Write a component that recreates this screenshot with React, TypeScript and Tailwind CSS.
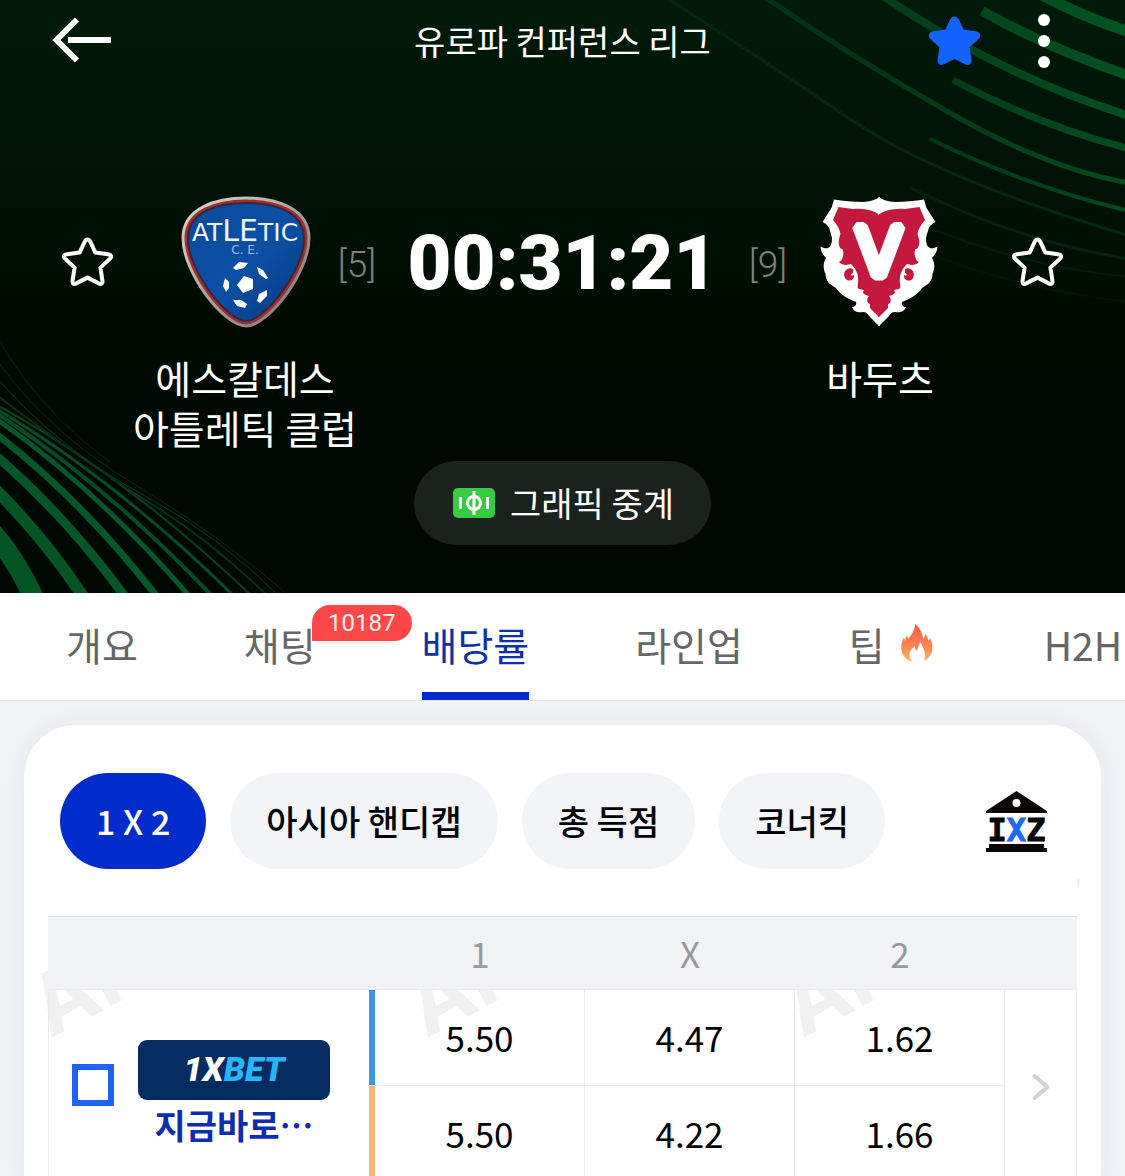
import React from "react";

const STAR_PATH =
  "M25.5 3.5 C27 3.5 27.8 4.6 28.6 6.4 L33.4 16.6 L46 18.2 C49.4 18.7 50 20.8 47.8 22.9 L38.4 31.6 L40.4 44.6 C40.9 47.6 39.2 48.7 36.8 47.4 L25.5 41.6 L14.2 47.4 C11.8 48.7 10.1 47.6 10.6 44.6 L12.6 31.6 L3.2 22.9 C1 20.8 1.6 18.7 5 18.2 L17.6 16.6 L22.4 6.4 C23.2 4.6 24 3.5 25.5 3.5 Z";

function Star({ filled = false }: { filled?: boolean }) {
  return (
    <svg viewBox="0 1 51 51" className="size-[51px]" aria-hidden="true">
      <path
        d={STAR_PATH}
        fill={filled ? "#1563ff" : "none"}
        stroke={filled ? "#1563ff" : "#ffffff"}
        strokeWidth="4"
        strokeLinejoin="round"
      />
    </svg>
  );
}

function HeroBackground() {
  return (
    <svg
      className="absolute inset-0 h-full w-full"
      viewBox="0 0 1125 593"
      preserveAspectRatio="none"
      aria-hidden="true"
    >
      <defs>
        <linearGradient id="hero" x1="0" y1="0" x2="0" y2="1">
          <stop offset="0" stopColor="#001a09" />
          <stop offset="0.4" stopColor="#000f04" />
          <stop offset="0.65" stopColor="#000901" />
          <stop offset="1" stopColor="#000801" />
        </linearGradient>
        <linearGradient id="ray" gradientUnits="userSpaceOnUse" x1="700" y1="260" x2="1125" y2="20">
          <stop offset="0" stopColor="#01240e" />
          <stop offset="0.5" stopColor="#033616" />
          <stop offset="1" stopColor="#025522" />
        </linearGradient>
      </defs>
      <rect width="1125" height="593" fill="url(#hero)" />
      <g fill="none" stroke="url(#ray)">
        <path d="M1040 -6 Q1085 18 1130 32" strokeWidth="11" />
        <path d="M982 11 Q1050 49 1130 76" strokeWidth="10" />
        <path d="M880 -6 Q1000 76 1130 116" strokeWidth="8" />
        <path d="M953 80 Q1040 126 1130 149" strokeWidth="7" />
        <path d="M762 -5 Q850 56 950 113 T1130 183" strokeWidth="5" />
        <path d="M930 139 Q1030 188 1130 211" strokeWidth="4" />
        <path d="M670 0 Q760 58 850 119 T1130 236" strokeWidth="3" stroke="#022813" />
        <path d="M911 188 Q1020 242 1130 259" strokeWidth="3" stroke="#02220e" />
        <path d="M925 226 Q1020 266 1130 277" strokeWidth="2" stroke="#011a09" />
        <path d="M925 252 Q1020 290 1130 302" strokeWidth="2" stroke="#011407" />
      </g>
      <g fill="none" stroke="#05572a">
        <path d="M-8 532 Q14 556 34 598" strokeWidth="20" stroke="#035624" />
        <path d="M-5 489 Q46 540 84 598" strokeWidth="12" stroke="#035624" />
        <path d="M-5 455 Q66 516 126 598" strokeWidth="9" />
        <path d="M-5 433 Q82 500 158 598" strokeWidth="7" />
        <path d="M-5 418 Q96 488 191 598" strokeWidth="5" />
        <path d="M-5 412 Q108 486 214 598" strokeWidth="4" stroke="#064b28" />
        <path d="M-5 408 Q116 480 236 598" strokeWidth="3" stroke="#064b28" />
        <path d="M-5 404 Q124 474 254 598" strokeWidth="2" stroke="#06401f" />
        <path d="M-5 394 Q90 466 150 503 T270 598" strokeWidth="2" stroke="#05301a" />
        <path d="M-5 376 Q60 450 140 493 T281 598" strokeWidth="1" stroke="#0a3a24" />
        <path d="M-5 358 Q50 434 134 484 T292 598" strokeWidth="1" stroke="#072818" />
        <path d="M-5 334 Q40 412 110 462" strokeWidth="1" stroke="#052013" />
      </g>
    </svg>
  );
}

function AtleticCrest() {
  return (
    <svg viewBox="0 0 132 134" className="h-[134px] w-[132px]" role="img" aria-label="Atlètic C.E.">
      <defs>
        <linearGradient id="shield" x1="0" y1="0" x2="1" y2="1">
          <stop offset="0" stopColor="#0a4a9a" />
          <stop offset="0.5" stopColor="#0b50a6" />
          <stop offset="1" stopColor="#083a80" />
        </linearGradient>
        <linearGradient id="rim" x1="0" y1="0" x2="1" y2="1">
          <stop offset="0" stopColor="#dcd6d2" />
          <stop offset="1" stopColor="#77706c" />
        </linearGradient>
      </defs>
      <path
        d="M66 3 C96 3 129 13 129 43 C129 78 88 131 66 131 C44 131 3 78 3 43 C3 13 36 3 66 3 Z"
        fill="#9c302b"
        stroke="url(#rim)"
        strokeWidth="3"
      />
      <path
        d="M66 8 C94 8 124 16 124 44 C124 75 85 126 66 126 C47 126 8 75 8 44 C8 16 38 8 66 8 Z"
        fill="url(#shield)"
        stroke="#3b2440"
        strokeWidth="2"
      />
      <g fill="#eef3fa" fontFamily="'DejaVu Sans', sans-serif" textAnchor="middle">
        <text x="65" y="46" fontSize="25">
          AT<tspan fontSize="30">LE</tspan>TIC
        </text>
        <text x="65" y="59" fontSize="12" fill="#9fb9dc">
          C. E.
        </text>
      </g>
      <g fill="#ffffff">
        <path d="M57 90 L64 81 L73 84 L73 94 L63 98 Z" />
        <path d="M53 73 L59 67 L68 68 L64 73 L56 75 Z" />
        <path d="M77 72 L83 75 L88 83 L86 84 L79 79 Z" />
        <path d="M87 95 L87 101 L80 108 L77 106 L79 99 Z" />
        <path d="M53 105 L61 105 L67 109 L65 113 L57 111 Z" />
        <path d="M45 83 L49 87 L49 93 L46 97 L43 91 Z" />
      </g>
    </svg>
  );
}

function VaduzHalf() {
  return (
    <>
      <path
        d="M60 2 C55 5 50 6.5 43 7 C33 7 23 6 14 4.5 L11.5 13 L2.5 27 C7 29 9.5 32 10 36 C13 43 12 48 10.5 51 C8 54 5 54 0.5 51.5 C1 57 3 60 6 63 C3 68 3 73 5.5 79 C6 86 9 89 16 93 C20 99 26 103 36 107 C37 110 35 112 32 112 C34 117 39 118 43 117 C46 117 48 119 49 121 L59 131 H60 Z"
        fill="#fff"
      />
      <path
        d="M60 20 C53 15 44 13 33 14 L18.5 12 L13 25 C17 30 20 34 20.5 39 C18 46 18 50 21 54 C23 53 24 57 23 61 C22 65 21 66 19 67 C23 71 28 70 31 69 C35 73 38 78 38 83 C39 89 36 92 39 94 L44 95 C41 99 46 100 49 101 C46 105 47 108 50 109 L50 113 L59 122 H60 Z"
        fill="#c4183f"
      />
      <path d="M33 74 C27 71 22 78 25 83 C28 88 35 85 34 80 C31 82 30 79 33 78 Z" fill="#c4183f" />
    </>
  );
}

function VaduzCrest() {
  return (
    <svg viewBox="0 0 118 134" className="h-[134px] w-[118px]" role="img" aria-label="FC Vaduz">
      <VaduzHalf />
      <g transform="matrix(-1 0 0 1 118 0)">
        <VaduzHalf />
      </g>
      <text
        x="59"
        y="81"
        fontSize="67"
        fontWeight="400"
        fontFamily="'DejaVu Sans', sans-serif"
        textAnchor="middle"
        fill="#fff"
        stroke="#fff"
        strokeWidth="9"
        strokeLinejoin="bevel"
      >
        V
      </text>
    </svg>
  );
}

function PitchIcon() {
  return (
    <svg viewBox="0 0 42 30" className="h-[30px] w-[42px]" aria-hidden="true">
      <rect width="42" height="30" rx="5" fill="#36cb40" />
      <g stroke="#fff" strokeWidth="3" fill="none">
        <circle cx="21" cy="15" r="6.5" />
        <path d="M21 3 V27 M7.500 9 V21 M34.5 9 V21" />
      </g>
    </svg>
  );
}

function Flame() {
  return (
    <svg viewBox="0 0 32 38" className="mr-[5px] mb-[4px] ml-[16px] h-[38px] w-[32px]" aria-hidden="true">
      <defs>
        <linearGradient id="flame" x1="0" y1="0" x2="0" y2="1">
          <stop offset="0" stopColor="#fb584a" />
          <stop offset="0.5" stopColor="#fc7d4f" />
          <stop offset="1" stopColor="#ffb75c" />
        </linearGradient>
      </defs>
      <path
        d="M14 0 C18 3 22 9 22 15 C23.5 14 24 12 24 10 C26.5 12 27 15 27.5 17 L29 14 C34 24 31 33 23 37 C25 32 24 27 20 19 C19 18 18.500 19 18.500 21 C17 23 16 26 15.500 27 C14 26 14 24 14 22 C10 25 8 28 8.500 32 C9 34 10 36 12 38 C3 36 -1 28 0.5 20 L3 13 L4 17 L6 11 L7 15 C11 10 14 6 14 0 Z"
        fill="url(#flame)"
      />
    </svg>
  );
}

function IxzIcon() {
  return (
    <svg viewBox="0 0 61 61" className="size-[61px]" aria-hidden="true">
      <path d="M30.5 0 L61 20 V22 H0 V20 Z" fill="#0b0605" />
      <circle cx="30.5" cy="12" r="4" fill="#fff" />
      <text
        x="30.5"
        y="50"
        fontSize="32"
        fontWeight="700"
        fontFamily="'DejaVu Sans Mono', monospace"
        textAnchor="middle"
        fill="#0b0605"
        stroke="#0b0605"
        strokeWidth="1"
      >
        I
        <tspan fill="#1e68fb" stroke="#1e68fb">
          X
        </tspan>
        Z
      </text>
      <path d="M3 53 H58 V57 H61 V61 H0 V57 H3 Z" fill="#0b0605" />
    </svg>
  );
}

const tabs = [
  { label: "개요" },
  { label: "채팅", badge: "10187" },
  { label: "배당률", active: true },
  { label: "라인업" },
  { label: "팁", hot: true },
  { label: "H2H" },
];

const filters = ["1 X 2", "아시아 핸디캡", "총 득점", "코너킥"];

const cellClass = "h-[96px] border-r border-b border-[#ececee] p-0 text-center";
const headClass = "h-[74px] border-t border-b border-t-[#dedfe3] border-b-[#ececee] bg-[#f2f3f7] p-0 font-normal";

export default function App() {
  return (
    <div className="flex h-screen flex-col overflow-hidden bg-[#f2f3f7] font-['Noto_Sans_CJK_KR',sans-serif]">
      <header className="relative shrink-0 bg-[#000a02] pb-[48px] text-white">
        <HeroBackground />
        <div className="relative">
          <div className="grid h-[82px] grid-cols-[1fr_auto_1fr] items-center px-[52px]">
            <button type="button" aria-label="뒤로" className="justify-self-start">
              <svg viewBox="0 0 60 48" className="h-[48px] w-[60px]" fill="none" stroke="#fff" strokeWidth="6" aria-hidden="true">
                <path d="M25 2.5 L4.5 23 L25 43.5 M16 23 H59" />
              </svg>
            </button>
            <h1 className="text-[34px] leading-[50px]">유로파 컨퍼런스 리그</h1>
            <div className="flex items-center gap-[38px] justify-self-end pr-[3px]">
              <button type="button" aria-label="즐겨찾기">
                <Star filled />
              </button>
              <button type="button" aria-label="더보기" className="flex w-[52px] flex-col items-center gap-[9px]">
                <span className="size-[12px] rounded-full bg-white" />
                <span className="size-[12px] rounded-full bg-white" />
                <span className="size-[12px] rounded-full bg-white" />
              </button>
            </div>
          </div>

          <div className="mt-[114px] flex h-[132px] items-center px-[62px]">
            <button type="button" aria-label="홈 팀 즐겨찾기">
              <Star />
            </button>
            <div className="ml-[67px] flex w-[132px] justify-center">
              <AtleticCrest />
            </div>
            <span className="w-[90px] pt-[6px] text-center font-['Roboto',sans-serif] text-[37px] font-light text-[#7c827d]">
              [5]
            </span>
            <time className="flex-1 pt-[2px] text-center font-['Roboto',sans-serif] text-[76px] leading-[80px] font-black">00:31:21</time>
            <span className="w-[90px] pt-[6px] text-center font-['Roboto',sans-serif] text-[37px] font-light text-[#7c827d]">
              [9]
            </span>
            <div className="mr-[67px] flex w-[132px] justify-center">
              <VaduzCrest />
            </div>
            <button type="button" aria-label="원정 팀 즐겨찾기">
              <Star />
            </button>
          </div>

          <div className="mt-[24px] flex justify-between px-[116px] text-center text-[39px] leading-[50px]">
            <h2 className="w-[258px]">
              에스칼데스
              <br />
              아틀레틱 클럽
            </h2>
            <h2 className="w-[258px]">바두츠</h2>
          </div>

          <div className="mt-[9px] flex justify-center">
            <button type="button" className="flex h-[84px] items-center gap-[15px] rounded-full bg-[#1b211c] pr-[37px] pl-[39px] text-[34px]">
              <PitchIcon />
              <span className="pb-[2px]">그래픽 중계</span>
            </button>
          </div>
        </div>
      </header>

      <nav className="flex h-[108px] shrink-0 gap-[106px] border-b border-[#e0e1e4] bg-white pl-[66px] text-[39px] whitespace-nowrap text-[#666666]">
        {tabs.map((tab) => (
          <a
            key={tab.label}
            href="#"
            className={
              tab.active
                ? "relative flex h-[107px] shrink-0 items-center border-b-8 border-[#002ccc] pt-[4px] text-[#1030a8]"
                : "relative flex h-[107px] shrink-0 items-center pb-[4px]"
            }
          >
            {tab.label}
            {tab.hot && <Flame />}
            {tab.badge && (
              <span className="absolute top-[12px] left-[68px] flex h-[36px] w-[100px] items-center justify-center rounded-full rounded-bl-none bg-[#ff4747] font-['Roboto',sans-serif] text-[24px] text-[#fff0f0]">
                {tab.badge}
              </span>
            )}
          </a>
        ))}
      </nav>

      <main className="min-h-0 flex-1 px-[24px] pt-[24px]">
        <section className="relative overflow-hidden rounded-t-[52px] bg-white px-[24px] shadow-[0_0_24px_rgba(40,50,90,0.06)]">
          <div
            className="absolute inset-0 overflow-hidden font-['Inter',sans-serif] text-[84px] leading-[84px] font-bold text-[#f1f1f2]"
            aria-hidden="true"
          >
            <span className="absolute top-[240px] left-[32px] origin-bottom-left -rotate-[28deg]">AiScore</span>
            <span className="absolute top-[240px] left-[408px] origin-bottom-left -rotate-[28deg]">AiScore</span>
            <span className="absolute top-[240px] left-[784px] origin-bottom-left -rotate-[28deg]">AiScore</span>
          </div>

          <div className="relative flex items-center justify-between bg-white pt-[48px] pr-[30px] pb-[47px] pl-[12px]">
            <div className="flex gap-[24px]">
              {filters.map((label, i) => (
                <button
                  key={label}
                  type="button"
                  className={
                    i === 0
                      ? "h-[96px] rounded-full bg-[#002ccc] px-[36px] pb-[2px] text-[34px] font-medium whitespace-nowrap text-white"
                      : "h-[96px] rounded-full bg-[#f3f4f8] px-[36px] pb-[2px] text-[34px] font-medium whitespace-nowrap text-black"
                  }
                >
                  {label}
                </button>
              ))}
            </div>
            <button type="button" aria-label="배당 업체">
              <IxzIcon />
            </button>
          </div>

          <table className="relative w-full table-fixed border-separate border-spacing-0 text-[35px]">
            <colgroup>
              <col className="w-[321px]" />
              <col className="w-[216px]" />
              <col />
              <col />
              <col className="w-[72px]" />
            </colgroup>
            <thead>
              <tr className="text-[#999999]">
                <th aria-label="업체" className={headClass} />
                <th className={headClass}>
                  <div className="pl-[6px]">1</div>
                </th>
                <th className={headClass}>X</th>
                <th className={headClass}>2</th>
                <th aria-label="상세" className={headClass} />
              </tr>
            </thead>
            <tbody>
              <tr>
                <td rowSpan={2} className="border-b border-l border-[#ececee] p-0 pl-[23px]">
                  <div className="flex items-center gap-[24px] pb-[2px]">
                    <input
                      type="checkbox"
                      aria-label="1XBET 선택"
                      className="size-[42px] shrink-0 appearance-none border-6 border-[#1f63f3] bg-white"
                    />
                    <a href="#" className="flex w-[192px] flex-col items-center pt-[20px] text-[#102db0]">
                      <span className="flex h-[60px] w-full items-center justify-center rounded-[9px] bg-[#042c61] font-['Roboto',sans-serif] text-[34px] font-black text-white italic">
                        1X<span className="text-[#26b6fb]">BET</span>
                      </span>
                      <span className="text-[34px] leading-[50px] font-bold">지금바로⋯</span>
                    </a>
                  </div>
                </td>
                <td className={cellClass}>
                  <div className="flex h-[95px] items-center justify-center border-l-6 border-[#3e95de]">5.50</div>
                </td>
                <td className={cellClass}>4.47</td>
                <td className={cellClass}>1.62</td>
                <td rowSpan={2} className="border-r border-b border-[#ececee] p-0 pb-[8px] text-center">
                  <button type="button" aria-label="자세히" className="align-middle">
                    <svg
                      viewBox="0 0 20 28"
                      className="h-[28px] w-[20px]"
                      fill="none"
                      stroke="#d2d2d4"
                      strokeWidth="4"
                      strokeLinecap="round"
                      strokeLinejoin="round"
                      aria-hidden="true"
                    >
                      <path d="M3.5 3 L16.5 14 L3.5 25" />
                    </svg>
                  </button>
                </td>
              </tr>
              <tr>
                <td className={cellClass}>
                  <div className="flex h-[95px] items-center justify-center border-l-6 border-[#f6b870]">5.50</div>
                </td>
                <td className={cellClass}>4.22</td>
                <td className={cellClass}>1.66</td>
              </tr>
            </tbody>
          </table>
        </section>
      </main>
    </div>
  );
}
